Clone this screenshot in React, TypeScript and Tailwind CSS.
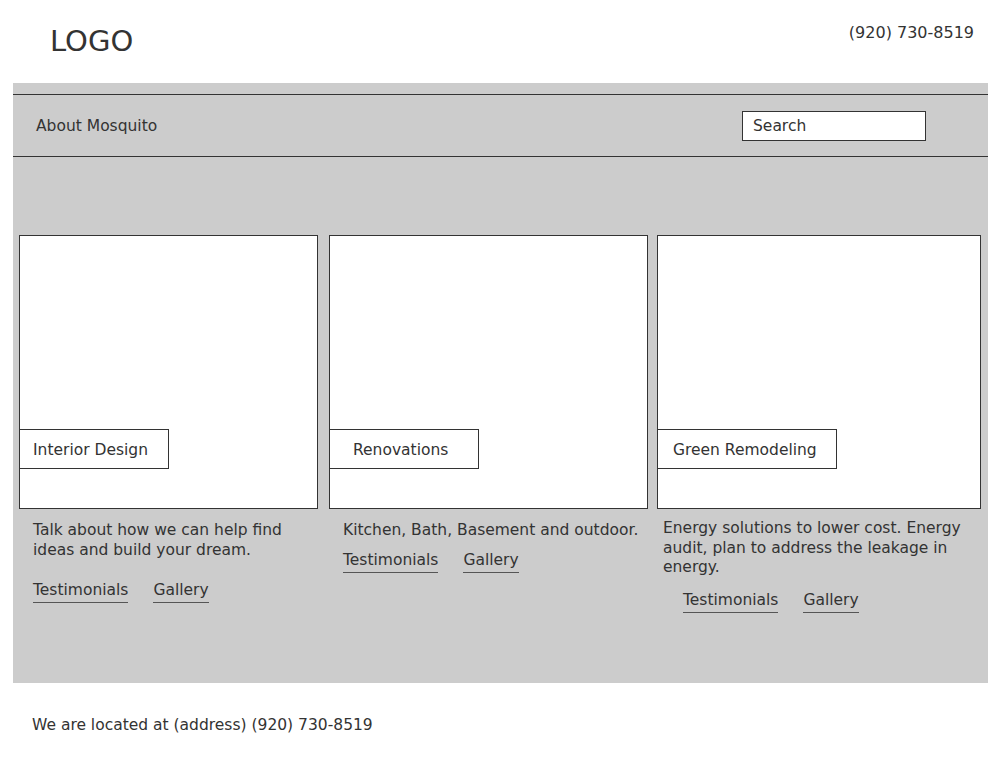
import React from "react";

const cards = [
  {
    title: "Interior Design",
    labelClass: "w-[150px] pl-[13px]",
    body: "Talk about how we can help find ideas and build your dream.",
    width: "w-[299px]",
    textClass: "pl-[14px] pr-[10px] pt-[12px]",
    linksClass: "pl-[14px] mt-[21px]",
  },
  {
    title: "Renovations",
    labelClass: "w-[150px] pl-[23px]",
    body: "Kitchen, Bath, Basement and outdoor.",
    width: "w-[319px]",
    textClass: "pl-[14px] pt-[12px]",
    linksClass: "pl-[14px] mt-[10px]",
  },
  {
    title: "Green Remodeling",
    labelClass: "w-[180px] pl-[15px]",
    body: "Energy solutions to lower cost. Energy audit, plan to address the leakage in energy.",
    width: "w-[324px]",
    textClass: "pl-[6px] pr-[8px] pt-[10px]",
    linksClass: "pl-[26px] mt-[13px]",
  },
];

function Card({ c }: { c: (typeof cards)[number] }) {
  return (
    <div className={c.width}>
      <div className="h-[274px] bg-white border border-[#333] flex flex-col justify-end pb-[39px]">
        <div className={`${c.labelClass} h-[40px] -ml-px pt-[3px] border border-[#333] bg-white flex items-center`}>
          {c.title}
        </div>
      </div>
      <p className={`${c.textClass} leading-[19.5px]`}>{c.body}</p>
      <div className={`${c.linksClass} flex gap-[25px]`}>
        <a className="border-b border-[#555] pb-[2px] leading-[19px]">Testimonials</a>
        <a className="border-b border-[#555] pb-[2px] leading-[19px]">Gallery</a>
      </div>
    </div>
  );
}

export default function App() {
  return (
    <div className="w-[1000px] h-[768px] bg-white text-[#333] text-[15.5px] font-['DejaVu_Sans',sans-serif]">
      {/* Header */}
      <header className="h-[83px] flex justify-between">
        <div className="pl-[50px] pt-[24px] text-[29px] leading-[34px]">LOGO</div>
        <div className="pr-[26px] pt-[23px] text-[16px] leading-[20px]">(920) 730-8519</div>
      </header>

      {/* Main gray area */}
      <main className="mx-[13px] w-[975px] h-[600px] bg-[#cccccc] pt-[11px]">
        <nav className="h-[63px] border-y border-[#333] flex items-center justify-between pl-[23px] pr-[62px]">
          <span className="pt-[2px]">About Mosquito</span>
          <div className="w-[184px] h-[30px] bg-white border border-[#333] pt-[2px] flex items-center pl-[10px]">
            Search
          </div>
        </nav>

        <div className="flex pl-[6px] pt-[78px]">
          <Card c={cards[0]} />
          <div className="ml-[11px]">
            <Card c={cards[1]} />
          </div>
          <div className="ml-[9px]">
            <Card c={cards[2]} />
          </div>
        </div>
      </main>

      <footer className="pl-[32px] pt-[32px] leading-[20px]">
        We are located at (address) (920) 730-8519
      </footer>
    </div>
  );
}
